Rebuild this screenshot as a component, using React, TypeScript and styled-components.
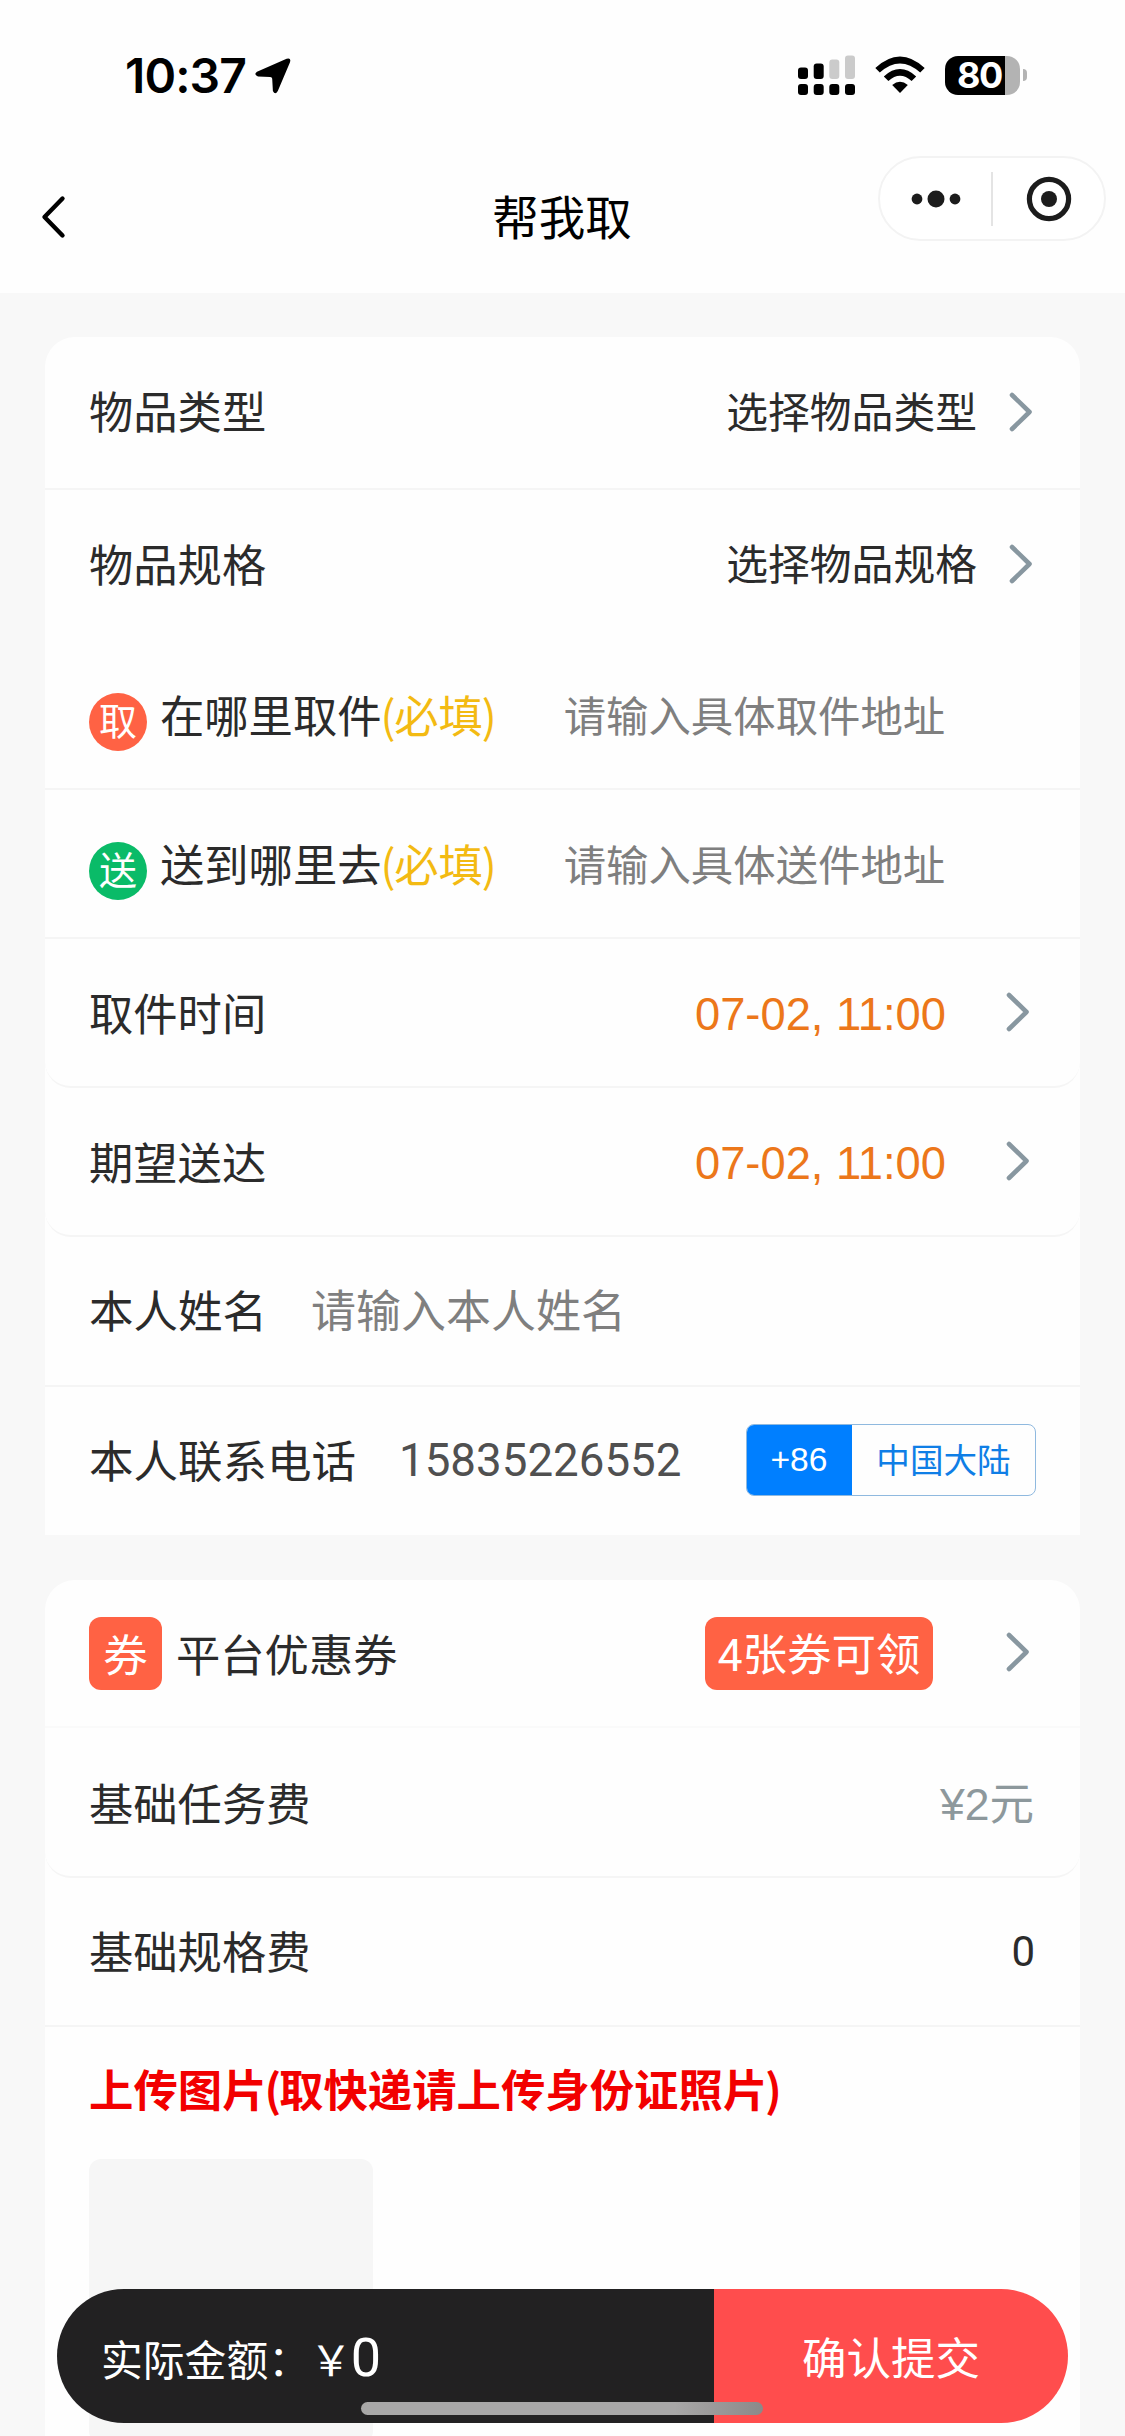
import React from "react";
import styled, { createGlobalStyle } from "styled-components";

const CJK = `"Noto Sans CJK SC", "Liberation Sans", sans-serif`;
const MIXED = `Roboto, "Noto Sans CJK SC", sans-serif`;
const LATIN = `"Liberation Sans", "Noto Sans CJK SC", sans-serif`;

const Global = createGlobalStyle`
  *, *::before, *::after { box-sizing: border-box; }
  body { margin: 0; background: #f8f8f8; }
`;

const Screen = styled.div`
  position: relative;
  width: 1125px;
  height: 2436px;
  overflow: hidden;
  display: flex;
  flex-direction: column;
  background: #f8f8f8;
  color: #2b2b2b;
  font-family: ${CJK};
  font-size: 44.5px;
  line-height: 1;
`;

const Header = styled.header`
  flex: none;
  height: 293px;
  background: #fefefe;
`;

const StatusBar = styled.div`
  display: flex;
  align-items: center;
  justify-content: space-between;
  height: 154px;
  padding: 0 98px 4px 125px;
`;

const StatusLeft = styled.div`
  display: flex;
  align-items: center;
  gap: 9px;
  padding-top: 1px;
`;

const Clock = styled.span`
  font-family: Inter, sans-serif;
  font-weight: 600;
  font-size: 48px;
  letter-spacing: -0.9px;
  color: #000;
`;

const StatusRight = styled.div`
  display: flex;
  align-items: center;
`;

const BatteryWrap = styled.div`
  display: flex;
  align-items: center;
  gap: 3px;
  margin-left: 20px;
`;

const Battery = styled.div`
  display: flex;
  align-items: center;
  width: 75px;
  height: 39px;
  padding-left: 12px;
  border-radius: 13px;
  background: linear-gradient(to right, #000 0 60px, #b3b3b3 60px);
  color: #fff;
  font-family: Inter, sans-serif;
  font-weight: 700;
  font-size: 36px;
  letter-spacing: -1.4px;
`;

const BatteryTip = styled.div`
  width: 4px;
  height: 12px;
  border-radius: 0 4px 4px 0;
  background: #b3b3b3;
`;

const NavBar = styled.div`
  display: grid;
  grid-template-columns: 1fr auto 1fr;
  height: 139px;
  padding: 0 19px 0 40px;
`;

const BackButton = styled.div`
  padding-top: 41px;
  svg { display: block; }
`;

const Title = styled.h1`
  margin: 0;
  padding: 36px 22px 0 0;
  font-size: 46.5px;
  font-weight: 400;
  line-height: 50px;
  color: #000;
`;

const Capsule = styled.div`
  justify-self: end;
  display: flex;
  align-items: center;
  margin-top: 2px;
  width: 228px;
  height: 85px;
  border: 2px solid #f3f3f3;
  border-radius: 43px;
  background: #fff;
`;

const CapsuleHalf = styled.div`
  flex: 1;
  display: flex;
  align-items: center;
  justify-content: center;
`;

const CapsuleDivider = styled.div`
  width: 2px;
  height: 54px;
  background: #e4e4e4;
`;

const Content = styled.main`
  flex: 1;
  min-height: 0;
  padding: 44px 45px 0;
`;

const Section = styled.section<{ $gap?: number }>`
  margin-top: ${(p) => p.$gap ?? 0}px;
  border-radius: 30px 30px 0 0;
  background: #fefefe;
`;

const Row = styled.div<{ $h?: number; $line?: string; $round?: boolean }>`
  display: flex;
  align-items: center;
  height: ${(p) => p.$h ?? 149}px;
  padding: 0 47px 0 44px;
  border-bottom: 2px solid ${(p) => p.$line ?? "#f5f5f5"};
  border-radius: ${(p) => (p.$round ? "0 0 26px 26px" : "0")};
`;

const Label = styled.span<{ $up?: number; $size?: number }>`
  padding-bottom: ${(p) => (p.$up ?? 0) * 2}px;
  font-size: ${(p) => p.$size ?? 44.3}px;
  line-height: 60px;
  white-space: nowrap;
`;

const Required = styled.span`
  color: #f3ba12;
`;

const Paren = styled.span<{ $trim: number }>`
  margin: 0 ${(p) => -p.$trim}px;
`;

const PickerValue = styled.span`
  margin-left: auto;
  margin-right: 32px;
  padding-bottom: 5px;
  font-size: 41.8px;
  line-height: 60px;
`;

const Round = styled.span<{ $bg: string }>`
  display: flex;
  align-items: center;
  justify-content: center;
  width: 58px;
  height: 58px;
  margin: 14px 13px 0 0;
  padding-bottom: 5px;
  border-radius: 50%;
  background: ${(p) => p.$bg};
  color: #fff;
  font-size: 38px;
`;

const Placeholder = styled.span<{ $size: number; $left: number; $up: number }>`
  margin-left: ${(p) => p.$left}px;
  padding-bottom: ${(p) => p.$up * 2}px;
  font-size: ${(p) => p.$size}px;
  line-height: 60px;
  color: #7f7f7f;
  white-space: nowrap;
`;

const Time = styled.span`
  margin-left: auto;
  margin-right: 60px;
  padding-top: 4px;
  font-family: ${LATIN};
  font-size: 45.3px;
  line-height: 60px;
  color: #ec771a;
`;

const Phone = styled.span`
  margin-left: 43px;
  padding-top: 2px;
  font-family: ${MIXED};
  font-size: 45.7px;
  color: #505050;
`;

const Region = styled.div`
  display: flex;
  width: 290px;
  height: 72px;
  margin-left: auto;
  margin-right: -3px;
  border: 1px solid #8fb9df;
  border-radius: 8px;
  overflow: hidden;
  font-size: 33.6px;
`;

const RegionCode = styled.span`
  display: flex;
  align-items: center;
  justify-content: center;
  width: 106px;
  margin: -1px 0 -1px -1px;
  background: #007fff;
  color: #fff;
  font-family: ${LATIN};
`;

const RegionName = styled.span`
  flex: 1;
  display: flex;
  align-items: center;
  justify-content: center;
  padding-bottom: 3px;
  color: #0f7ee6;
`;

const CouponIcon = styled.span`
  display: flex;
  align-items: center;
  justify-content: center;
  width: 73px;
  height: 73px;
  margin-right: 14px;
  border-radius: 12px;
  background: #ff6244;
  color: #fff;
`;

const CouponTag = styled.span`
  display: flex;
  align-items: center;
  justify-content: center;
  width: 228px;
  height: 73px;
  margin-left: auto;
  margin-right: 73px;
  padding-top: 6px;
  border-radius: 12px;
  background: #ff6244;
  color: #fff;
  font-family: ${MIXED};
`;

const Fee = styled.span`
  margin-left: auto;
  margin-right: -1px;
  padding-top: 6px;
  font-family: ${LATIN};
  color: #8d989c;
`;

const Zero = styled.span`
  margin-left: auto;
  margin-right: -2px;
  font-family: ${MIXED};
  font-size: 42px;
`;

const Upload = styled.div`
  padding: 31px 44px 0;
  background: #fefefe;
  height: 420px;
`;

const UploadTitle = styled.h2`
  margin: 0 0 41px;
  font-size: 44.4px;
  font-weight: 700;
  line-height: 60px;
  color: #f20000;
`;

const UploadBox = styled.div`
  width: 284px;
  height: 284px;
  border-radius: 12px;
  background: #f6f6f6;
`;

const SubmitBar = styled.footer`
  position: absolute;
  left: 57px;
  top: 2289px;
  width: 1011px;
  height: 134px;
  display: flex;
  border-radius: 67px;
  overflow: hidden;
  color: #fff;
`;

const Amount = styled.div`
  display: flex;
  align-items: baseline;
  width: 657px;
  padding: 39px 0 0 44px;
  background: #222122;
  font-size: 41.8px;
  line-height: 60px;
`;

const AmountValue = styled.span`
  margin-left: -1px;
  font-family: ${MIXED};
  font-size: 54px;
`;

const Submit = styled.div`
  flex: 1;
  display: flex;
  align-items: center;
  justify-content: center;
  background: #ff4d4d;
`;

const HomeIndicator = styled.div`
  position: absolute;
  left: 361px;
  top: 2402px;
  width: 402px;
  height: 13px;
  border-radius: 7px;
  background: linear-gradient(to right, #a8a7a7 0 78%, #8b8989 100%);
`;

const ChevronIcon = styled.svg`
  flex: none;
  margin-bottom: 2px;
`;

const Chevron = ({ shift = 0 }: { shift?: number }) => (
  <ChevronIcon width={24 + shift} height="40" viewBox={`0 0 ${24 + shift} 40`} fill="none">
    <path d="M3 3 L20.5 20 L3 37" stroke="#8897a0" strokeWidth="4.6" strokeLinecap="round" strokeLinejoin="round" />
  </ChevronIcon>
);

const LocationArrow = () => (
  <svg width="36" height="36" viewBox="0 0 36 36">
    <path d="M31.6 0.8 Q36.4 -0.6 35 4.2 L22.8 33 Q20.2 37.6 17.9 33 L17.2 20.8 Q17.1 18.9 15.2 18.9 L3 18.4 Q-1.8 16.6 2 13.8 Z" fill="#000" />
  </svg>
);

const Signal = () => (
  <svg width="57" height="40" viewBox="0 0 57 40">
    <g fill="#000">
      <rect x="0" y="12.5" width="10" height="11.5" rx="3" />
      <rect x="15.7" y="8.5" width="10" height="15.5" rx="3" />
      <rect x="0" y="29" width="10" height="11" rx="3" />
      <rect x="15.7" y="29" width="10" height="11" rx="3" />
      <rect x="31.3" y="29" width="10" height="11" rx="3" />
      <rect x="47" y="29" width="10" height="11" rx="3" />
    </g>
    <g fill="#cbcbcb">
      <rect x="31.3" y="4.5" width="10" height="19.5" rx="3" />
      <rect x="47" y="0.5" width="10" height="23.5" rx="3" />
    </g>
  </svg>
);

const WifiIcon = styled.svg`
  margin-left: 20px;
`;

const Wifi = () => (
  <WifiIcon width="50" height="38" viewBox="0 0 50 38">
    <path d="M0.3 12 Q25 -11 49.7 12 L45.2 16.6 Q25 -1.6 4.8 16.6 Z" fill="#000" />
    <path d="M8.8 20.4 Q25 5.6 41.2 20.4 L36.6 25 Q25 14.6 13.4 25 Z" fill="#000" />
    <path d="M17.2 29 Q25 22.4 32.8 29 L25 37 Z" fill="#000" />
  </WifiIcon>
);

const RequiredMark = () => (
  <Required>
    <Paren $trim={1.1}>(</Paren>必填<Paren $trim={1.1}>)</Paren>
  </Required>
);

export default function App() {
  return (
    <Screen>
      <Global />
      <Header>
        <StatusBar>
          <StatusLeft>
            <Clock>10:37</Clock>
            <LocationArrow />
          </StatusLeft>
          <StatusRight>
            <Signal />
            <Wifi />
            <BatteryWrap>
              <Battery>80</Battery>
              <BatteryTip />
            </BatteryWrap>
          </StatusRight>
        </StatusBar>
        <NavBar>
          <BackButton>
            <svg width="26" height="44" viewBox="0 0 26 44" fill="none">
              <path d="M22.5 3.5 L4.5 22 L22.5 40.5" stroke="#000" strokeWidth="4.4" strokeLinecap="round" strokeLinejoin="round" />
            </svg>
          </BackButton>
          <Title>帮我取</Title>
          <Capsule>
            <CapsuleHalf>
              <svg width="50" height="18" viewBox="0 0 50 18" fill="#1c1c1c">
                <circle cx="6" cy="9" r="5.4" />
                <circle cx="25" cy="9" r="8.5" />
                <circle cx="44" cy="9" r="5.4" />
              </svg>
            </CapsuleHalf>
            <CapsuleDivider />
            <CapsuleHalf>
              <svg width="46" height="46" viewBox="0 0 46 46">
                <circle cx="23" cy="23" r="19.6" fill="none" stroke="#1c1c1c" strokeWidth="5.2" />
                <circle cx="23" cy="23" r="8" fill="#1c1c1c" />
              </svg>
            </CapsuleHalf>
          </Capsule>
        </NavBar>
      </Header>

      <Content>
        <Section>
          <Row $h={153}>
            <Label $up={2.5}>物品类型</Label>
            <PickerValue>选择物品类型</PickerValue>
            <Chevron />
          </Row>
          <Row $h={151} $line="transparent">
            <Label $up={2}>物品规格</Label>
            <PickerValue>选择物品规格</PickerValue>
            <Chevron />
          </Row>
          <Row>
            <Round $bg="#ff6244">取</Round>
            <Label $up={0.5}>在哪里取件<RequiredMark /></Label>
            <Placeholder $size={42.4} $left={68} $up={1}>请输入具体取件地址</Placeholder>
          </Row>
          <Row>
            <Round $bg="#0abb68">送</Round>
            <Label $up={0.5}>送到哪里去<RequiredMark /></Label>
            <Placeholder $size={42.4} $left={68} $up={1}>请输入具体送件地址</Placeholder>
          </Row>
          <Row $round>
            <Label $up={0.5}>取件时间</Label>
            <Time>07-02, 11:00</Time>
            <Chevron shift={3} />
          </Row>
          <Row $round>
            <Label $up={0.5}>期望送达</Label>
            <Time>07-02, 11:00</Time>
            <Chevron shift={3} />
          </Row>
          <Row $h={150}>
            <Label $up={2} $size={44.5}>本人姓名</Label>
            <Placeholder $size={45} $left={44} $up={2}>请输入本人姓名</Placeholder>
          </Row>
          <Row $h={148} $line="transparent">
            <Label $up={1.5} $size={44.5}>本人联系电话</Label>
            <Phone>15835226552</Phone>
            <Region>
              <RegionCode>+86</RegionCode>
              <RegionName>中国大陆</RegionName>
            </Region>
          </Row>
        </Section>

        <Section $gap={45}>
          <Row $h={148} $line="#fafafa">
            <CouponIcon>券</CouponIcon>
            <Label>平台优惠券</Label>
            <CouponTag>4张券可领</CouponTag>
            <Chevron shift={3} />
          </Row>
          <Row $h={150} $round>
            <Label>基础任务费</Label>
            <Fee>¥2元</Fee>
          </Row>
          <Row>
            <Label $up={2}>基础规格费</Label>
            <Zero>0</Zero>
          </Row>
          <Upload>
            <UploadTitle>
              上传图片<Paren $trim={2.2}>(</Paren>取快递请上传身份证照片<Paren $trim={2.2}>)</Paren>
            </UploadTitle>
            <UploadBox />
          </Upload>
        </Section>
      </Content>

      <SubmitBar>
        <Amount>
          实际金额：￥<AmountValue>0</AmountValue>
        </Amount>
        <Submit>确认提交</Submit>
      </SubmitBar>
      <HomeIndicator />
    </Screen>
  );
}
